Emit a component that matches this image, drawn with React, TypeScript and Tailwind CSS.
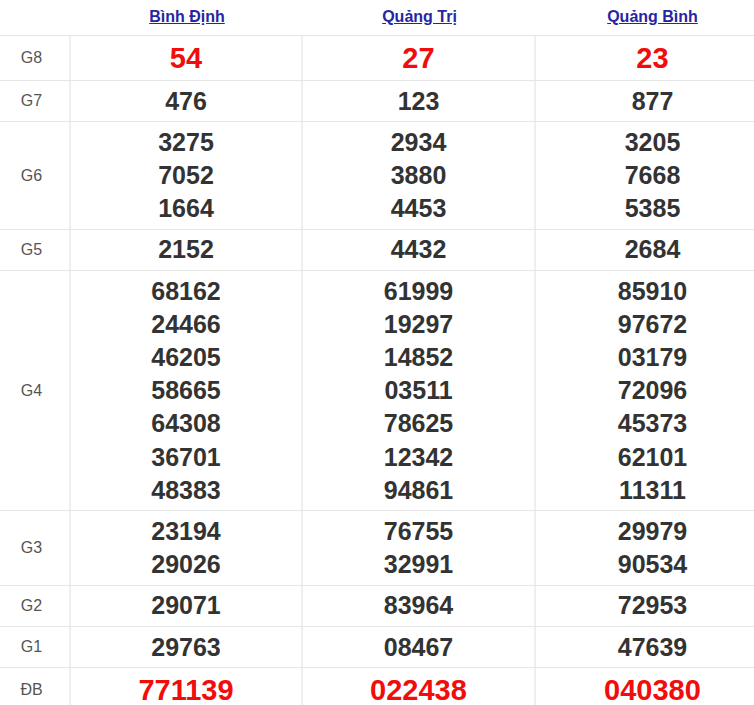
import React from "react";

type Row = { label: string; values: string[][]; big?: boolean };

const provinces = ["Bình Định", "Quảng Trị", "Quảng Bình"];

const rows: Row[] = [
    { label: "G8", values: [["54"], ["27"], ["23"]], big: true },
    { label: "G7", values: [["476"], ["123"], ["877"]] },
    {
        label: "G6",
        values: [
            ["3275", "7052", "1664"],
            ["2934", "3880", "4453"],
            ["3205", "7668", "5385"],
        ],
    },
    { label: "G5", values: [["2152"], ["4432"], ["2684"]] },
    {
        label: "G4",
        values: [
            ["68162", "24466", "46205", "58665", "64308", "36701", "48383"],
            ["61999", "19297", "14852", "03511", "78625", "12342", "94861"],
            ["85910", "97672", "03179", "72096", "45373", "62101", "11311"],
        ],
    },
    {
        label: "G3",
        values: [
            ["23194", "29026"],
            ["76755", "32991"],
            ["29979", "90534"],
        ],
    },
    { label: "G2", values: [["29071"], ["83964"], ["72953"]] },
    { label: "G1", values: [["29763"], ["08467"], ["47639"]] },
    { label: "ĐB", values: [["771139"], ["022438"], ["040380"]], big: true },
];

export default function App() {
    return (
        <div className="w-[754px] h-[705px] overflow-hidden bg-white font-['Liberation_Sans',Arial,sans-serif]">
            <div className="w-[769px]">
                {/* header */}
                <div className="grid grid-cols-[71px_232px_233px_233px] h-[36px] border-b border-[#e6e6e6]">
                    <div />
                    {provinces.map((p) => (
                        <div key={p} className="flex items-center justify-center pb-[2px]">
                            <a href="#" className="text-[16px] font-bold text-[#2626a3] underline">
                                {p}
                            </a>
                        </div>
                    ))}
                </div>

                {rows.map((row) => (
                    <div
                        key={row.label}
                        className="grid grid-cols-[71px_232px_233px_233px] border-b border-[#e6e6e6]"
                    >
                        <div className="flex items-center justify-center pr-[6px] border-r-2 border-[#efefef] text-[16px] text-[#555]">
                            {row.label}
                        </div>
                        {row.values.map((col, i) => (
                            <div
                                key={i}
                                className={
                                    "flex flex-col items-center py-[3.5px] " +
                                    (i < 2 ? "border-r-2 border-[#efefef]" : "")
                                }
                            >
                                {col.map((n) => (
                                    <div
                                        key={n}
                                        className={
                                            row.big
                                                ? "text-[29px] leading-[37px] font-bold text-[#f20d0d]"
                                                : "text-[25px] leading-[33.2px] font-bold text-[#333]"
                                        }
                                    >
                                        {n}
                                    </div>
                                ))}
                            </div>
                        ))}
                    </div>
                ))}
            </div>
        </div>
    );
}
